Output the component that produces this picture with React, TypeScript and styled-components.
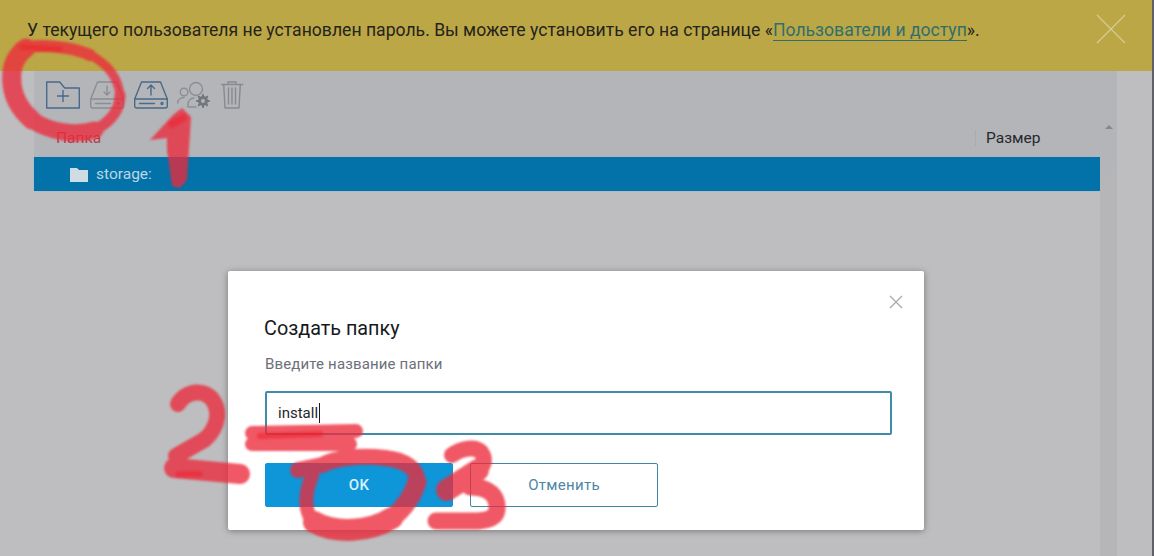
import React from 'react'
import styled, { createGlobalStyle } from 'styled-components'

const GlobalStyle = createGlobalStyle`
  html, body {
    margin: 0;
    padding: 0;
    background: #bebec0;
    font-family: Roboto, "Liberation Sans", sans-serif;
  }
`

const Page = styled.div`
  position: relative;
  display: flex;
  width: 1154px;
  height: 556px;
  overflow: hidden;
`

const Main = styled.div`
  display: flex;
  flex-direction: column;
  width: 1152px;
  background: #bebec0;
`

const EdgeStrip = styled.div`
  width: 2px;
  background: #5f6068;
`

const Banner = styled.div`
  display: flex;
  align-items: flex-start;
  justify-content: space-between;
  flex: 0 0 71px;
  padding: 20px 26px 0 27px;
  box-sizing: border-box;
  background: #bca747;
  color: #24241a;
  font-size: 17.6px;
  line-height: 20px;
`

const BannerLink = styled.a`
  color: #2f6f6b;
  border-bottom: 1px solid #2f6f6b;
`

const BannerClose = styled.svg`
  width: 30px;
  height: 30px;
  margin-top: -6px;
  stroke: #d8cc92;
  stroke-width: 1.2;
  fill: none;
`

const Workspace = styled.div`
  display: flex;
  flex: 1;
  padding-left: 34px;
`

const Panel = styled.div`
  display: flex;
  flex-direction: column;
  width: 1066px;
`

const PanelHead = styled.div`
  background: #b4b5b9;
`

const Toolbar = styled.div`
  display: flex;
  align-items: center;
  gap: 9.75px;
  height: 54px;
  padding: 0 0 7px 12px;
  box-sizing: border-box;
`

const ToolIcon = styled.svg<{ $tone: string }>`
  width: 34px;
  height: 28px;
  fill: none;
  stroke: ${(p) => p.$tone};
  stroke-width: 1.4;
  stroke-linecap: round;
  stroke-linejoin: round;
`

const ColumnRow = styled.div`
  display: flex;
  align-items: center;
  justify-content: space-between;
  height: 32px;
  padding-bottom: 6px;
  box-sizing: border-box;
  font-size: 15.5px;
`

const FolderColumn = styled.span`
  padding-left: 22px;
  color: #b53c4d;
`

const SizeColumn = styled.span`
  width: 125px;
  box-sizing: border-box;
  padding-left: 10px;
  border-left: 1px solid #a9abb2;
  color: #26272c;
  line-height: 16px;
`

const TreeRow = styled.div`
  display: flex;
  align-items: center;
  gap: 8px;
  height: 34px;
  padding-left: 36px;
  background: #0272a9;
  box-shadow: 0 0 2px #8fb6cc;
  color: #bdd6e3;
  font-size: 15.5px;
`

const FolderGlyph = styled.svg`
  width: 18px;
  height: 16px;
  fill: #cfdce4;
`

const ScrollTrack = styled.div`
  display: flex;
  justify-content: center;
  width: 17px;
  padding-top: 54px;
  box-sizing: border-box;
  background: linear-gradient(#b4b5b9 0, #b4b5b9 86px, #b6b6b8 120px);
`

const ScrollArrow = styled.div`
  width: 0;
  height: 0;
  border-left: 4px solid transparent;
  border-right: 4px solid transparent;
  border-bottom: 4px solid #86878b;
`

const Dialog = styled.div`
  position: absolute;
  left: 228px;
  top: 271px;
  width: 696px;
  height: 259px;
  box-sizing: border-box;
  padding: 47px 32px 0 36px;
  background: #fff;
  border-radius: 2px;
  box-shadow: 0 1px 6px rgba(60, 60, 64, 0.55);
`

const DialogClose = styled.svg`
  position: absolute;
  top: 24px;
  right: 21px;
  width: 14px;
  height: 14px;
  stroke: #a9acb0;
  stroke-width: 1.4;
`

const DialogTitle = styled.div`
  font-size: 19.8px;
  line-height: 22px;
  color: #17181b;
`

const FieldLabel = styled.div`
  margin: 15px 0 0 1px;
  font-size: 15px;
  line-height: 18px;
  letter-spacing: 0.15px;
  color: #6d7079;
`

const TextField = styled.div`
  display: flex;
  align-items: center;
  height: 44px;
  margin: 18px 0 0 1px;
  padding-left: 11px;
  box-sizing: border-box;
  border: 2px solid #3f8ba8;
  border-radius: 2px;
  font-size: 15px;
  color: #25262a;
`

const Caret = styled.span`
  width: 1px;
  height: 20px;
  margin-left: 1px;
  background: #1a1a1a;
`

const Actions = styled.div`
  display: flex;
  gap: 17px;
  margin: 28px 0 0 1px;
`

const ActionButton = styled.div<{ $primary?: boolean }>`
  display: flex;
  align-items: center;
  justify-content: center;
  width: 188px;
  height: 44px;
  box-sizing: border-box;
  border-radius: 2px;
  border: 1px solid ${(p) => (p.$primary ? '#0f96d8' : '#3f87a3')};
  background: ${(p) => (p.$primary ? '#0f96d8' : '#fff')};
  color: ${(p) => (p.$primary ? '#d8f2fb' : '#4b86a6')};
  font-size: 15px;
  font-weight: ${(p) => (p.$primary ? 500 : 400)};
  letter-spacing: 0.3px;
`

const PaintLayer = styled.svg`
  position: absolute;
  inset: 0;
  width: 1154px;
  height: 556px;
  pointer-events: none;
  fill: none;
  stroke-linecap: round;
  stroke-linejoin: round;
`

// brush strokes of the hand-drawn marks, one entry per stretch of equal width
const marks = [
  // circle round the first icon
  { d: 'M20 48 C40 44 70 46 90 55', w: 12 },
  { d: 'M90 55 C108 64 118 78 120 95', w: 9 },
  { d: 'M120 95 C120 110 110 122 95 130', w: 11 },
  { d: 'M95 130 C75 136 50 132 32 120', w: 17 },
  { d: 'M32 120 C18 108 10 92 12 72 C13 62 18 54 26 48', w: 19 },
  // 2
  { d: 'M178 404 C186 390 206 388 214 402 C222 416 214 432 204 440', w: 16 },
  { d: 'M204 440 L176 456', w: 16 },
  { d: 'M174 468 L240 474', w: 20 },
  // dash under the field
  { d: 'M252 433 L356 431', w: 14 },
  { d: 'M252 444 L350 444', w: 14 },
  // circle round OK
  { d: 'M312 476 C304 495 304 512 314 522', w: 14 },
  { d: 'M314 522 C335 534 370 532 392 518', w: 22 },
  { d: 'M392 518 C402 510 412 498 417 482', w: 19 },
  { d: 'M417 482 C418 468 404 460 385 458', w: 16 },
  { d: 'M385 458 C360 455 335 458 322 465 L298 470', w: 16 },
  // 3
  { d: 'M452 455 C462 448 475 446 481 452 C487 460 484 470 470 475', w: 16 },
  { d: 'M447 490 L478 470', w: 22 },
  { d: 'M470 487 C490 487 498 496 497 510 C496 518 488 520 478 521 L436 521', w: 17 },
]

const accents = [
  { d: 'M22 47 L60 49', w: 5 },
  { d: 'M172 124 L183 118', w: 7 },
  { d: 'M178 474 L200 474', w: 5 },
  { d: 'M260 436 L320 434', w: 6 },
]

const FolderPlusIcon = () => (
  <ToolIcon viewBox="0 0 34 28" $tone="#47698c">
    <path d="M.7 1h13l5 6h14.600v20H.7z" />
    <path d="M17 9.500v11M11.500 15h11" />
  </ToolIcon>
)

const DriveIcon = ({ tone, arrow }: { tone: string; arrow: string }) => (
  <ToolIcon viewBox="0 0 34 28" $tone={tone}>
    <path d="M7.500 1h19l6.800 17v7a2 2 0 0 1-2 2H2.700a2 2 0 0 1-2-2v-7z" />
    <path d="M.7 18h32.600M5.500 22.500h15" />
    <circle cx="28" cy="22.500" r="1" />
    <path d={arrow} />
  </ToolIcon>
)

const UsersGearIcon = () => (
  <ToolIcon viewBox="0 0 34 28" $tone="#8b8e95">
    <circle cx="19" cy="8" r="6.500" />
    <circle cx="7" cy="11" r="3.800" />
    <path d="M.7 22c0-3.500 2.800-5.500 6.300-5.500M11 26v-3c0-3 2.500-6 6-6M11 26h8" />
    <circle cx="26" cy="20" r="3.500" strokeWidth="3" stroke="#74777d" />
    <path d="M26 14v2M26 24v2M20 20h2M30 20h2M21.800 15.800l1.400 1.400M28.800 22.800l1.400 1.400M21.800 24.200l1.400-1.400M28.800 17.200l1.400-1.400" strokeWidth="2" stroke="#74777d" />
  </ToolIcon>
)

const TrashIcon = () => (
  <ToolIcon viewBox="0 0 34 28" $tone="#868991">
    <path d="M.7 3.500h21M7 3.500V1h8v2.500M2.700 3.500L4 27h14l1.300-23.500" />
    <path d="M7.500 7v16M11 7v16M14.500 7v16" />
  </ToolIcon>
)

const App: React.FC = () => {
  return (
    <Page>
      <GlobalStyle />
      <Main>
        <Banner>
          <span>
            У текущего пользователя не установлен пароль. Вы можете установить его на странице «
            <BannerLink>Пользователи и доступ</BannerLink>».
          </span>
          <BannerClose viewBox="0 0 30 30">
            <path d="M1 1l28 28M29 1L1 29" />
          </BannerClose>
        </Banner>
        <Workspace>
          <Panel>
            <PanelHead>
              <Toolbar>
                <FolderPlusIcon />
                <DriveIcon tone="#8a8d94" arrow="M17 5v9M14 11l3 3 3-3" />
                <DriveIcon tone="#4a6a86" arrow="M17 14V4M13.500 7.500L17 4l3.500 3.500" />
                <UsersGearIcon />
                <TrashIcon />
              </Toolbar>
              <ColumnRow>
                <FolderColumn>Папка</FolderColumn>
                <SizeColumn>Размер</SizeColumn>
              </ColumnRow>
            </PanelHead>
            <TreeRow>
              <FolderGlyph viewBox="0 0 18 16">
                <path d="M0 2h7l2 2h9v12H0z" />
              </FolderGlyph>
              storage:
            </TreeRow>
          </Panel>
          <ScrollTrack>
            <ScrollArrow />
          </ScrollTrack>
        </Workspace>
      </Main>
      <EdgeStrip />
      <Dialog>
        <DialogClose viewBox="0 0 14 14">
          <path d="M1 1l12 12M13 1L1 13" />
        </DialogClose>
        <DialogTitle>Создать папку</DialogTitle>
        <FieldLabel>Введите название папки</FieldLabel>
        <TextField>
          install
          <Caret />
        </TextField>
        <Actions>
          <ActionButton $primary>OK</ActionButton>
          <ActionButton>Отменить</ActionButton>
        </Actions>
      </Dialog>
      <PaintLayer viewBox="0 0 1154 556">
        <defs>
          <filter id="soft">
            <feGaussianBlur stdDeviation="1" />
          </filter>
        </defs>
        <g filter="url(#soft)" opacity="0.78" stroke="#ec2b3a">
          {marks.map((m) => (
            <path key={m.d} d={m.d} strokeWidth={m.w} />
          ))}
          <path d="M150 140 L173 115 L182 108 L191 117 L187 180 L180 188 L172 186 L167 150 L167 138 Z" fill="#ec2b3a" stroke="none" />
        </g>
        <g filter="url(#soft)" opacity="0.5" stroke="#f01c28">
          {accents.map((m) => (
            <path key={m.d} d={m.d} strokeWidth={m.w} />
          ))}
        </g>
      </PaintLayer>
    </Page>
  )
}

export default App
